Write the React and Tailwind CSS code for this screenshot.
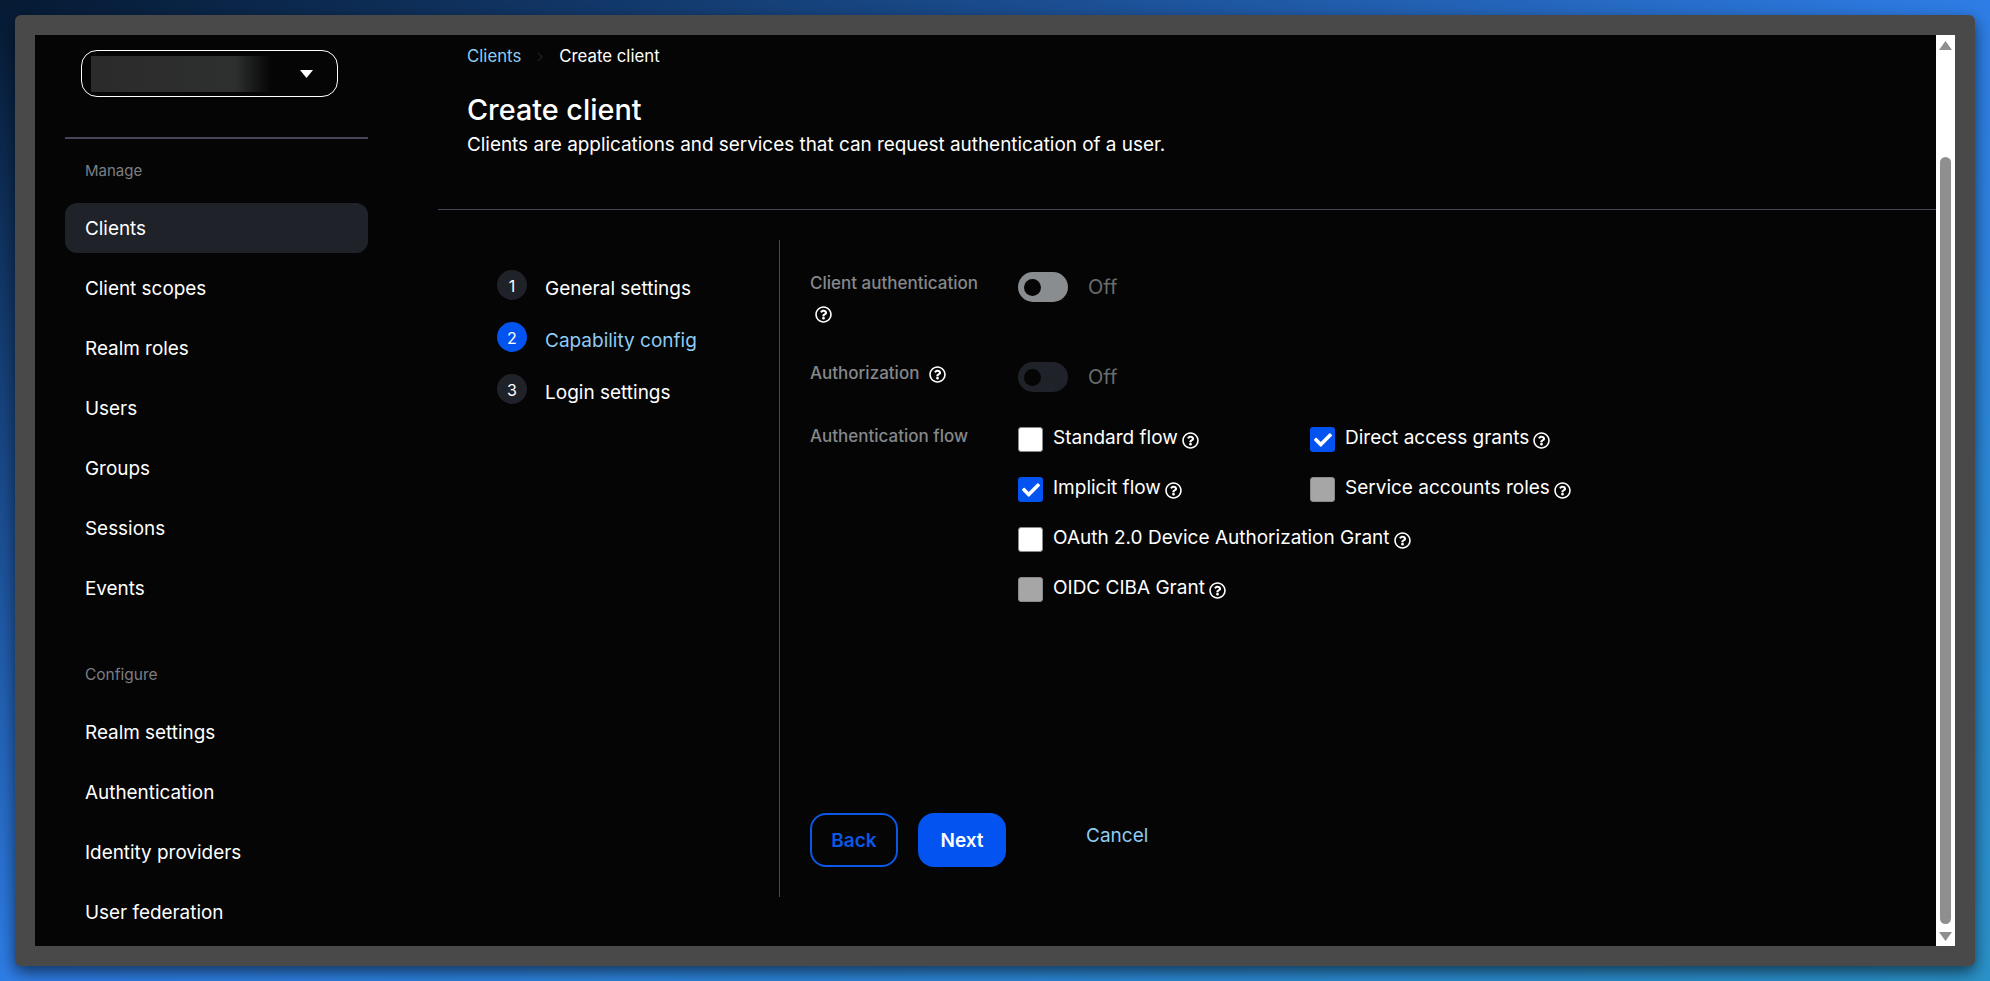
import { FaCheck, FaRegQuestionCircle } from "react-icons/fa";

const manageItems = ["Clients", "Client scopes", "Realm roles", "Users", "Groups", "Sessions", "Events"];
const configureItems = ["Realm settings", "Authentication", "Identity providers", "User federation"];
const steps = [
  { n: 1, label: "General settings" },
  { n: 2, label: "Capability config", active: true },
  { n: 3, label: "Login settings" },
];

function Help({ className = "" }) {
  return <FaRegQuestionCircle className={`h-[17px] w-[17px] shrink-0 text-white ${className}`} />;
}

function NavItem({ label, active }) {
  return (
    <a
      className={`flex h-[50px] items-center rounded-xl px-5 pt-[2px] text-[18.9px] text-white ${
        active ? "bg-[#1f2229]" : ""
      }`}
    >
      {label}
    </a>
  );
}

function Toggle({ dim }) {
  return (
    <div className="flex h-[30px] items-center">
      <div
        className={`flex h-[30px] w-[50px] items-center rounded-full pl-[6px] ${
          dim ? "bg-[#1f2229]" : "bg-[#8a8d8f]"
        }`}
      >
        <div className="h-[17px] w-[17px] rounded-full bg-[#050505]" />
      </div>
      <span className="ml-5 text-[20px] text-[#6a6d6f]">Off</span>
    </div>
  );
}

function Check({ label, state }) {
  return (
    <div className="flex items-start">
      {state === "checked" && (
        <div className="flex h-[25px] w-[25px] shrink-0 items-center justify-center rounded-[3px] bg-[#0353f0] text-white">
          <FaCheck className="h-[18px] w-[18px]" />
        </div>
      )}
      {state === "empty" && (
        <div className="h-[25px] w-[25px] shrink-0 rounded-[3px] border border-[#8a8a8a] bg-white" />
      )}
      {state === "disabled" && (
        <div className="h-[25px] w-[25px] shrink-0 rounded-[3px] border border-[#8a8a8a] bg-[#a6a6a6]" />
      )}
      <span className="ml-[10px] flex h-[22px] items-center whitespace-nowrap text-[19px] leading-[22px] text-white">
        {label}
        <Help className="ml-[4px] mt-[4px]" />
      </span>
    </div>
  );
}

export default function App() {
  return (
    <div className="h-[981px] w-[1990px] overflow-hidden bg-[linear-gradient(to_bottom_right,#061a33_0%,#2e7de6_50%,#2a92c8_100%)] p-[15px] font-[Inter,sans-serif]">
      <div className="flex h-[951px] w-[1960px] rounded-md border-[20px] border-[#484948] bg-[#050505] shadow-[0_6px_16px_rgba(0,0,0,0.6)]">
        {/* Sidebar */}
        <aside className="w-[401px] shrink-0 overflow-hidden pl-[30px] pr-[68px]">
          <div className="ml-4 mt-[15px] flex h-[47px] w-[257px] items-center rounded-2xl border border-white pl-[9px]">
            <div className="h-[36px] w-[180px] bg-[linear-gradient(90deg,#2b2b2b_0%,#2e2f2f_80%,#050505_100%)]" />
            <svg className="ml-[29px] h-[8px] w-[13px]" viewBox="0 0 13 8">
              <path d="M0 0h13L6.5 8z" fill="#fff" />
            </svg>
          </div>

          <div className="mt-10 border-t-2 border-[#46465a]" />
          <p className="mt-[22px] h-5 pl-5 text-[15px] leading-5 text-[#7b7f84]">Manage</p>
          <nav className="mt-[22px] flex flex-col gap-[10px]">
            {manageItems.map((item) => (
              <NavItem key={item} label={item} active={item === "Clients"} />
            ))}
          </nav>
          <p className="mt-[52px] h-5 pl-5 text-[15.5px] leading-5 text-[#7b7f84]">Configure</p>
          <nav className="mt-[22px] flex flex-col gap-[10px]">
            {configureItems.map((item) => (
              <NavItem key={item} label={item} />
            ))}
          </nav>
        </aside>

        {/* Main */}
        <main className="min-w-0 flex-1">
          <div className="ml-[1px] mt-[9px] flex h-[24px] items-center pl-[30px] pt-[2px] text-[16.8px]">
            <a className="text-[#8ecbf2]">Clients</a>
            <svg className="mx-[15px] h-[10px] w-[8px]" viewBox="0 0 8 10">
              <path d="M2 1l4 4-4 4" fill="none" stroke="#1a1c22" strokeWidth="1.5" />
            </svg>
            <span className="text-white">Create client</span>
          </div>

          <div className="pl-[31px]">
            <h1 className="mt-[24px] text-[28.8px] font-medium leading-9 text-white">Create client</h1>
            <p className="mt-1 text-[18.9px] leading-[26px] text-white">
              Clients are applications and services that can request authentication of a user.
            </p>
          </div>

          <div className="ml-[2px] mt-[51px] border-t border-[#46465a]" />

          <div className="mt-[30px] flex h-[657px]">
            {/* Steps */}
            <div className="flex w-[344px] shrink-0 flex-col gap-[22px] border-r border-[#46465a] pl-[61px] pt-[30px]">
              {steps.map((s) => (
                <div key={s.n} className="flex h-[30px] items-center">
                  <span
                    className={`flex h-[30px] w-[30px] items-center justify-center rounded-full pt-[1px] text-[16px] text-white ${
                      s.active ? "bg-[#0353f0]" : "bg-[#1f2229]"
                    }`}
                  >
                    {s.n}
                  </span>
                  <span className={`ml-[18px] mt-[8px] text-[19px] ${s.active ? "text-[#8ecbf2]" : "text-white"}`}>
                    {s.label}
                  </span>
                </div>
              ))}
            </div>

            {/* Form */}
            <div className="flex flex-1 flex-col justify-between pb-[30px] pl-[30px] pt-[32px]">
              <div className="flex flex-col">
                <div className="grid h-[90px] grid-cols-[208px_1fr]">
                  <div>
                    <p className="mt-[1px] text-[17px] font-medium leading-[20px] text-[#85888b]">Client authentication</p>
                    <Help className="ml-[5px] mt-[13px]" />
                  </div>
                  <Toggle />
                </div>
                <div className="grid h-[65px] grid-cols-[208px_1fr]">
                  <div className="flex h-[22px] items-center">
                    <span className="text-[17px] font-medium leading-[20px] text-[#85888b]">Authorization</span>
                    <Help className="ml-[10px] mt-[2px]" />
                  </div>
                  <Toggle dim />
                </div>
                <div className="grid grid-cols-[208px_1fr]">
                  <p className="mt-[-1px] text-[17px] font-medium leading-[20px] text-[#85888b]">Authentication flow</p>
                  <div className="grid grid-cols-[292px_1fr] gap-y-[25px]">
                    <Check label="Standard flow" state="empty" />
                    <Check label="Direct access grants" state="checked" />
                    <Check label="Implicit flow" state="checked" />
                    <Check label="Service accounts roles" state="disabled" />
                    <div className="col-span-2">
                      <Check label="OAuth 2.0 Device Authorization Grant" state="empty" />
                    </div>
                    <div className="col-span-2">
                      <Check label="OIDC CIBA Grant" state="disabled" />
                    </div>
                  </div>
                </div>
              </div>

              <div className="flex items-start">
                <button className="h-[54px] w-[88px] rounded-2xl border-2 border-[#0b57e6] pt-[2px] text-[19px] font-semibold text-[#0b57e6]">
                  Back
                </button>
                <button className="ml-5 h-[54px] w-[88px] rounded-2xl bg-[#0353f0] pt-[2px] text-[19px] font-semibold text-white">
                  Next
                </button>
                <a className="ml-20 flex h-11 items-center pt-[2px] text-[19px] text-[#8ecbf2]">Cancel</a>
              </div>
            </div>
          </div>
        </main>

        {/* Scrollbar */}
        <div className="flex w-[19px] shrink-0 flex-col items-center bg-white pt-[6px]">
          <svg className="h-[9px] w-[13px]" viewBox="0 0 13 9">
            <path d="M6.5 0L13 9H0z" fill="#8f8f8f" />
          </svg>
          <div className="mt-[107px] h-[767px] w-[11px] rounded-full bg-[#8f8f8f]" />
          <svg className="mt-2 h-[9px] w-[13px]" viewBox="0 0 13 9">
            <path d="M0 0h13L6.5 9z" fill="#8f8f8f" />
          </svg>
        </div>
      </div>
    </div>
  );
}
